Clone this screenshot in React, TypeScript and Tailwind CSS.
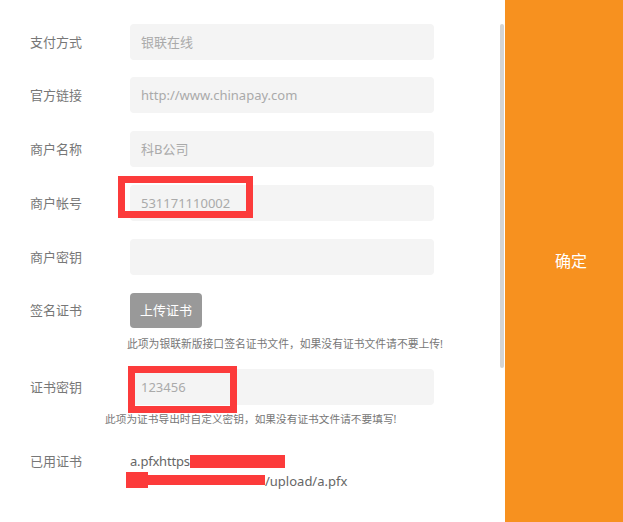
const font = { fontFamily: '"Noto Sans", "Noto Sans CJK SC", sans-serif' }

interface FieldProps {
  label: string
  value?: string
  className?: string
  children?: React.ReactNode
}

function Field({ label, value, className = '', children }: FieldProps) {
  return (
    <div className={`flex items-center h-9 ${className}`}>
      <div className="w-[130px] pl-[30px] text-[13px] text-[#777]">{label}</div>
      <div className="relative w-[304px] h-9 rounded bg-[#f4f4f4] pl-[11px] flex items-center text-[13px] text-[#aaa]">
        {value}
        {children}
      </div>
    </div>
  )
}

export default function App() {
  return (
    <div className="flex w-[623px] h-[522px] bg-white overflow-hidden leading-none" style={font}>
      <div className="w-[500px] shrink-0 flex flex-col">
        <Field label="支付方式" value="银联在线" className="mt-6" />
        <Field label="官方链接" value="http://www.chinapay.com" className="mt-[17px]" />
        <Field label="商户名称" value="科B公司" className="mt-[18px]" />
        <Field label="商户帐号" value="531171110002" className="mt-[18px]">
          {/* red annotation box */}
          <div className="absolute left-[-12px] top-[-9px] w-[135px] h-[42px] border-[7px] border-[#fc3b3b]" />
        </Field>
        <Field label="商户密钥" className="mt-[18px]" />

        <div className="flex items-center h-[35px] mt-[18px]">
          <div className="w-[130px] pl-[30px] text-[13px] text-[#777]">签名证书</div>
          <button className="w-[72px] h-[35px] rounded bg-[#999] text-white text-[13px]">上传证书</button>
        </div>
        <p className="mt-2 pl-[127px] text-[10.8px] leading-4 text-[#777] whitespace-nowrap">
          此项为银联新版接口签名证书文件，如果没有证书文件请不要上传!
        </p>

        <Field label="证书密钥" value="123456" className="mt-[17px]">
          <div className="absolute left-[-2px] top-[-3px] w-[109px] h-[47px] border-[7px] border-[#fc3b3b]" />
        </Field>
        <p className="mt-1.5 pl-[105px] text-[10.7px] leading-4 text-[#777] whitespace-nowrap">
          此项为证书导出时自定义密钥，如果没有证书文件请不要填写!
        </p>

        <div className="flex mt-6">
          <div className="w-[130px] pl-[30px] text-[13px] leading-5 text-[#777]">已用证书</div>
          <div className="text-[13px] leading-5 text-[#666]">
            <div className="flex items-center">
              <span className="tracking-[-0.2px]">a.pfxhttps</span>
              <span className="inline-block w-[95px] h-[13px] bg-[#fc3b3b]" />
            </div>
            <div className="flex items-center">
              <span className="relative inline-block w-[135px] h-5">
                <span className="absolute left-[-4px] top-[1px] w-[22px] h-4 bg-[#fc3b3b]" />
                <span className="absolute left-[-4px] top-[4px] w-[139px] h-[10px] bg-[#fc3b3b]" />
              </span>
              /upload/a.pfx
            </div>
          </div>
        </div>
      </div>

      {/* scrollbar */}
      <div className="w-[5px] shrink-0 pt-6">
        <div className="w-1 h-[344px] rounded-sm bg-[#d4d4d4]" />
      </div>

      <div className="flex-1 bg-[#f7911f] flex items-center justify-center pl-[14px]">
        <span className="text-white text-base">确定</span>
      </div>
    </div>
  )
}
